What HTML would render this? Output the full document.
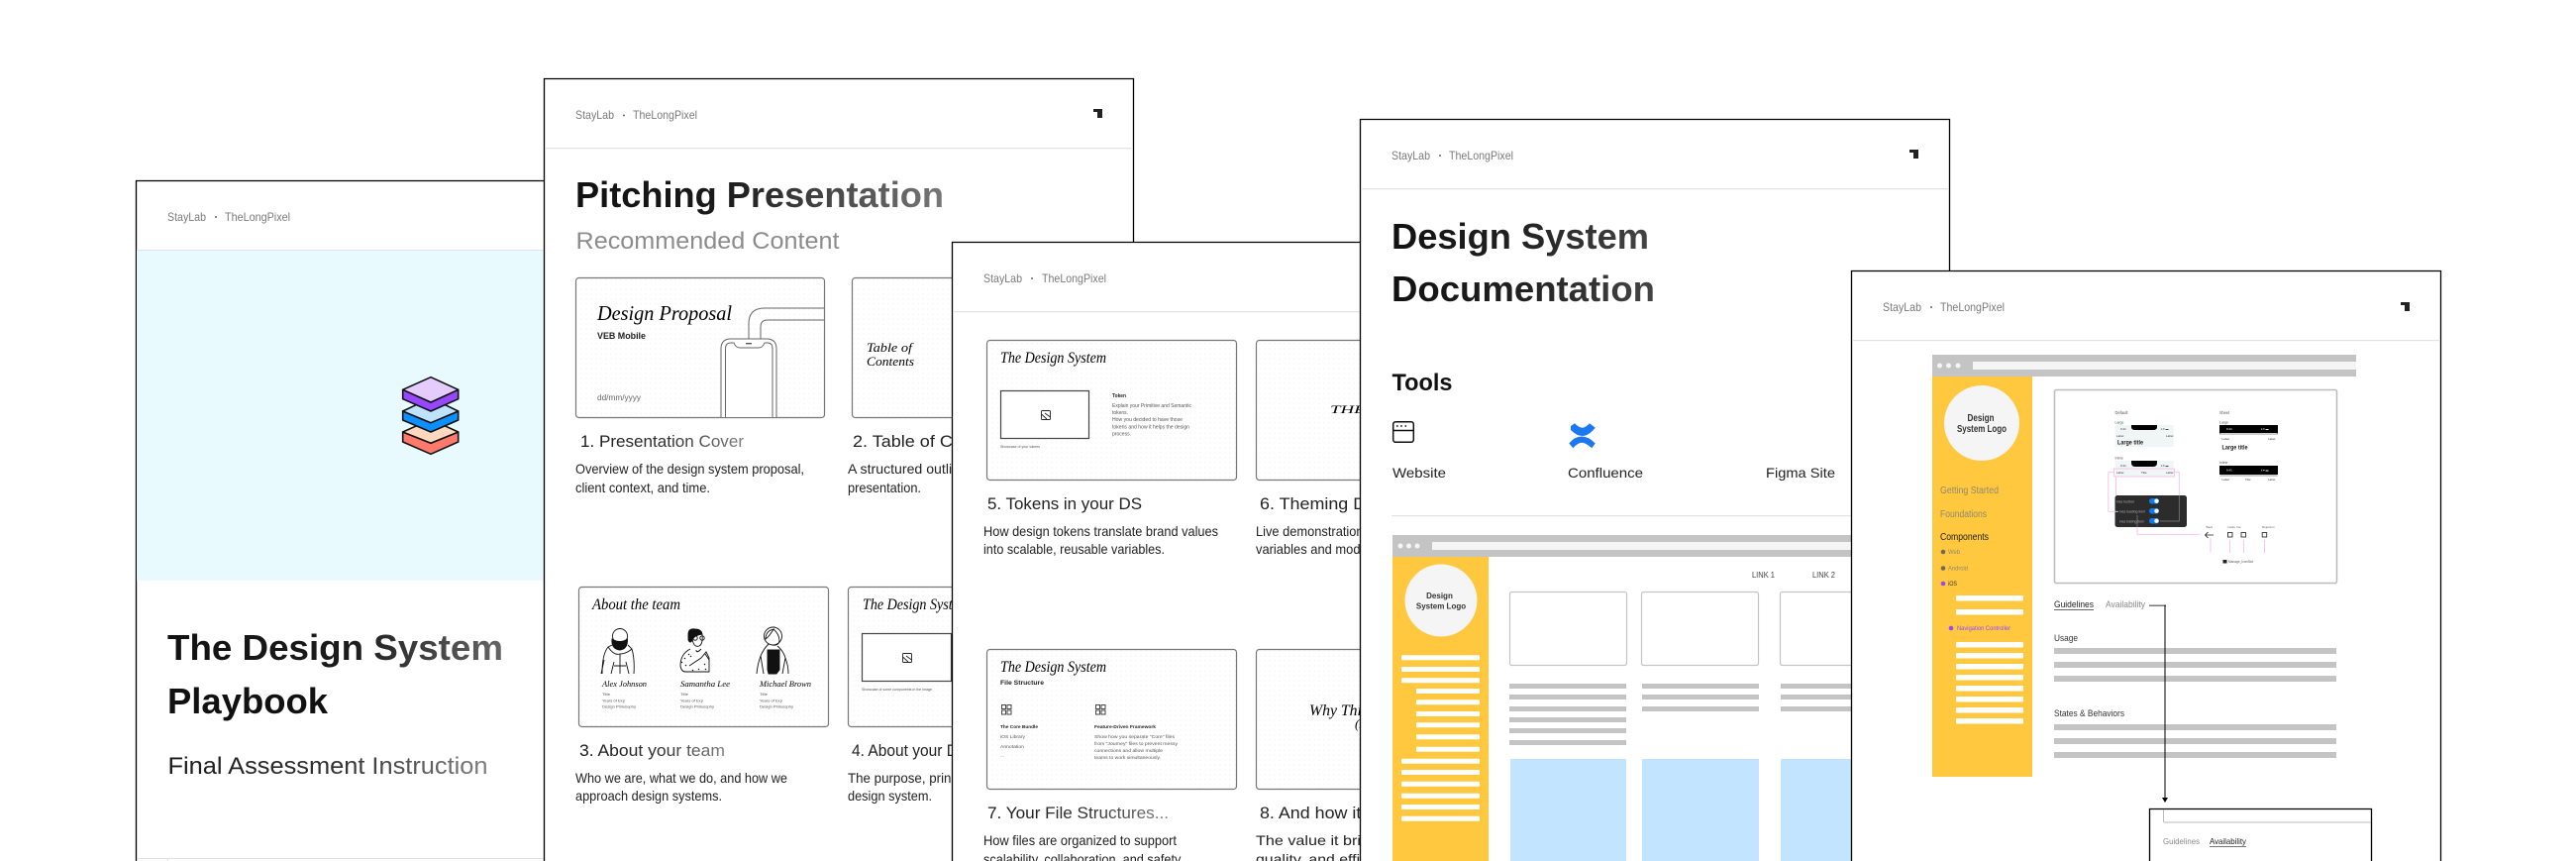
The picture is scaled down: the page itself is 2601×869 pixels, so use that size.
<!DOCTYPE html>
<html><head><meta charset="utf-8"><title>Design System Playbook</title>
<style>
html,body{margin:0;padding:0;background:#fff;width:2601px;height:869px;overflow:hidden}
svg{display:block;overflow:hidden}
text{font-family:"Liberation Sans",sans-serif;white-space:pre}
.h{font-size:12px;fill:#7a7a7a}
.t{font-size:36px;font-weight:700}
.l{font-size:17px;fill:#222}
.d{font-size:14px;fill:#222}
.s{font-family:"Liberation Serif",serif;font-style:italic;font-weight:400;fill:#000}
.m{fill:#555}
.b{fill:#c4c4c4}
.w{fill:#fff}
.pk{fill:none;stroke:#f8bfe6;stroke-width:.9}
.th{stroke:#777;stroke-width:1.2}
.c{fill:#fff;stroke:#000;stroke-width:1.3}
</style></head><body>
<svg xmlns="http://www.w3.org/2000/svg" width="2601" height="869" viewBox="0 0 2601 869">
<defs>
<pattern id="dots" width="5" height="5" patternUnits="userSpaceOnUse"><circle cx="2" cy="2" r=".55" fill="#e6e6e6"/></pattern>
<linearGradient id="g1"><stop offset="0" stop-color="#111"/><stop offset=".55" stop-color="#1c1c1c"/><stop offset="1" stop-color="#666"/></linearGradient>
<linearGradient id="g2"><stop offset="0" stop-color="#111"/><stop offset=".5" stop-color="#222"/><stop offset="1" stop-color="#444"/></linearGradient>
<linearGradient id="g3"><stop offset="0" stop-color="#1a1a1a"/><stop offset=".55" stop-color="#333"/><stop offset="1" stop-color="#808080"/></linearGradient>
<linearGradient id="g4"><stop offset="0" stop-color="#111"/><stop offset=".4" stop-color="#1a1a1a"/><stop offset="1" stop-color="#777"/></linearGradient>
</defs>

<!-- CARD 1 -->
<path class="c" d="M137.500 869V182.500H732.500V869"/>
<text class="h" x="169" y="223" textLength="39" lengthAdjust="spacingAndGlyphs">StayLab</text>
<circle cx="218" cy="219" r="1" fill="#666"/>
<text class="h" x="227" y="223" textLength="66" lengthAdjust="spacingAndGlyphs">TheLongPixel</text>
<rect x="138" y="252" width="594" height="1.500" fill="#e2e2e2"/>
<rect x="138" y="253" width="594" height="333" fill="#e9fafe"/>
<!-- layers icon -->
<g stroke="#111" stroke-width="1.600" stroke-linejoin="round">
<path d="M406.700 436V446L435 458.300L462.700 446V436L435 447.300Z" fill="#ff7a6b"/>
<path d="M435 423.300L462.700 436L435 447.300L406.700 436Z" fill="#ffd8bf"/>
<path d="M406.700 415V424L435 436L462.700 424V415L435 426.700Z" fill="#0d8fff"/>
<path d="M435 401.700L462.700 415L435 426.700L406.700 415Z" fill="#bde3ff"/>
<path d="M406.700 393.300V402.700L435 415L462.700 402.700V393.300L435 406Z" fill="#9747ff"/>
<path d="M435 380.700L462.700 393.300L435 406L406.700 393.300Z" fill="#e4ccff"/>
</g>
<text class="t" x="169" y="666" fill="url(#g1)" textLength="339" lengthAdjust="spacingAndGlyphs">The Design System</text>
<text class="t" x="169" y="720" fill="#111" textLength="162" lengthAdjust="spacingAndGlyphs">Playbook</text>
<text x="169.500" y="781" font-size="24" fill="url(#g3)" textLength="323" lengthAdjust="spacingAndGlyphs">Final Assessment Instruction</text>
<rect x="138" y="866" width="594" height="1" fill="#e0e0e0"/><rect x="169" y="866" width="1" height="3" fill="#e0e0e0"/>

<!-- CARD 2 -->
<path class="c" d="M549.500 869V79.500H1144.500V869"/>
<text class="h" x="581" y="120" textLength="39" lengthAdjust="spacingAndGlyphs">StayLab</text>
<circle cx="630" cy="116.500" r="1" fill="#666"/>
<text class="h" x="639" y="120" textLength="65" lengthAdjust="spacingAndGlyphs">TheLongPixel</text>
<path d="M1104 110H1113V119H1108V113H1104Z" fill="#222"/>
<rect x="550" y="149" width="594" height="1.200" fill="#e2e2e2"/>
<text class="t" x="581" y="209" fill="url(#g4)" textLength="372" lengthAdjust="spacingAndGlyphs">Pitching Presentation</text>
<text x="581.500" y="251" font-size="24" fill="#8c8c8c" textLength="266" lengthAdjust="spacingAndGlyphs">Recommended Content</text>

<rect x="581.500" y="280.500" width="251" height="141" rx="3" fill="#fff" class="th"/>
<rect x="582" y="281" width="250" height="140" rx="3" fill="url(#dots)"/>
<text class="s" x="603" y="323" font-size="21" textLength="136" lengthAdjust="spacingAndGlyphs">Design Proposal</text>
<text x="603" y="342" font-size="9" font-weight="700" fill="#222" textLength="49" lengthAdjust="spacingAndGlyphs">VEB Mobile</text>
<text x="603" y="404" font-size="8" fill="#666" textLength="44" lengthAdjust="spacingAndGlyphs">dd/mm/yyyy</text>
<g fill="none" stroke="#666" stroke-width="1">
<path d="M756 342V327Q756 311 772 311H832"/>
<path d="M768 342V330Q768 323 775 323H832"/>
<path d="M728 421V352Q728 342 738 342H774Q784 342 784 352V421" fill="#fff"/>
<path d="M732.500 421V352Q732.500 346 738 346H741Q743 351 747 351H766Q770 351 772 346H775Q780 346 780 352V421"/>
</g>
<rect x="753" y="346" width="6" height="1.400" fill="#555"/>

<rect x="860.500" y="280.500" width="251" height="141" rx="3" fill="#fff" class="th"/>
<rect x="861" y="281" width="250" height="140" rx="3" fill="url(#dots)"/>
<text class="s" x="875" y="355" font-size="13" textLength="46" lengthAdjust="spacingAndGlyphs">Table of</text>
<text class="s" x="875" y="369" font-size="13" textLength="48" lengthAdjust="spacingAndGlyphs">Contents</text>

<text class="l" x="586" y="451" style="fill:url(#g3)" textLength="165" lengthAdjust="spacingAndGlyphs">1. Presentation Cover</text>
<text class="l" x="861" y="451" textLength="160" lengthAdjust="spacingAndGlyphs">2. Table of Contents</text>
<text class="d" x="581" y="478" textLength="231" lengthAdjust="spacingAndGlyphs">Overview of the design system proposal,</text>
<text class="d" x="581" y="497" textLength="136" lengthAdjust="spacingAndGlyphs">client context, and time.</text>
<text class="d" x="856" y="478" textLength="160" lengthAdjust="spacingAndGlyphs">A structured outline of the</text>
<text class="d" x="856" y="497" textLength="74" lengthAdjust="spacingAndGlyphs">presentation.</text>

<rect x="584.500" y="592.500" width="252" height="141" rx="3" fill="#fff" class="th"/>
<rect x="585" y="593" width="251" height="140" rx="3" fill="url(#dots)"/>
<text class="s" x="598" y="615" font-size="16" textLength="89" lengthAdjust="spacingAndGlyphs">About the team</text>
<!-- person 1 -->
<g fill="none" stroke="#111" stroke-width=".9">
<circle cx="626" cy="642" r="7.500" fill="#fff"/>
<path d="M618 645Q617 655 626 656Q634 655 633.500 645Q626 650 618 645Z" fill="#111"/>
<path d="M618 651L614 653Q608 660 608 680M634 651L638 655Q641 665 640 680M614 653Q620 662 626 660Q632 660 638 655M626 660V680M620 672H632M617 680L620 668M635 680L632 668"/>
<path d="M607 680L610 666"/>
</g>
<!-- person 2 -->
<g fill="none" stroke="#111" stroke-width=".9">
<path d="M695 640Q695 634 702 635Q708 635 709 640Q701 641 699 646Q697 650 695 646Z" fill="#111"/>
<path d="M699 644Q700 654 706 652Q710 650 709 640"/>
<circle cx="702" cy="644" r="2.200"/><circle cx="709" cy="644" r="2.200"/>
<path d="M697 655Q687 660 687 672Q688 678 692 678H716V664L713 658L708 664L696 672M703 656Q703 660 708 655M712 660L716 666"/>
<path d="M691 664l1 1M697 662l1 1M692 671l1 1M699 676l1 1M705 675l1 1M711 670l1 1M712 675l1 1M688 668l1 1M695 660l1 1" stroke-width="1.200"/>
</g>
<!-- person 3 -->
<g fill="none" stroke="#111" stroke-width=".9">
<circle cx="780.500" cy="642" r="9" fill="#fff"/>
<path d="M773 645Q773 637 781 635Q777 642 773 645ZM781 635Q787 640 787 647Q786 652 780 651"/>
<path d="M776 650Q771 655 768 662Q765 670 764 680M785 652Q791 657 793 664Q796 672 796 680M768 662L771 680M793 664L790 680"/>
<path d="M775 656H787V676L784 680H776L775 676Z" fill="#111"/>
</g>
<text class="s" x="608" y="693" font-size="8" textLength="45" lengthAdjust="spacingAndGlyphs">Alex Johnson</text>
<text class="s" x="687" y="693" font-size="8" textLength="50" lengthAdjust="spacingAndGlyphs">Samantha Lee</text>
<text class="s" x="767" y="693" font-size="8" textLength="52" lengthAdjust="spacingAndGlyphs">Michael Brown</text>
<g font-size="4" class="m">
<text x="608" y="702" textLength="8" lengthAdjust="spacingAndGlyphs">Title</text><text x="608" y="708.500" textLength="23" lengthAdjust="spacingAndGlyphs">Years of Exp</text><text x="608" y="714.500" textLength="34" lengthAdjust="spacingAndGlyphs">Design Philosophy</text>
<text x="687" y="702" textLength="8" lengthAdjust="spacingAndGlyphs">Title</text><text x="687" y="708.500" textLength="23" lengthAdjust="spacingAndGlyphs">Years of Exp</text><text x="687" y="714.500" textLength="34" lengthAdjust="spacingAndGlyphs">Design Philosophy</text>
<text x="767" y="702" textLength="8" lengthAdjust="spacingAndGlyphs">Title</text><text x="767" y="708.500" textLength="23" lengthAdjust="spacingAndGlyphs">Years of Exp</text><text x="767" y="714.500" textLength="34" lengthAdjust="spacingAndGlyphs">Design Philosophy</text>
</g>

<rect x="856.500" y="592.500" width="252" height="141" rx="3" fill="#fff" class="th"/>
<rect x="857" y="593" width="251" height="140" rx="3" fill="url(#dots)"/>
<text class="s" x="871" y="615" font-size="16" textLength="107" lengthAdjust="spacingAndGlyphs">The Design System</text>
<rect x="870.500" y="639.500" width="90" height="48" fill="#fff" stroke="#444" stroke-width="1.200"/>
<g fill="none" stroke="#222" stroke-width=".9"><rect x="911.500" y="659.500" width="9" height="9" rx="1"/><path d="M911.500 663L917 668M915 662l5.500 4"/></g>
<text x="870" y="697" font-size="3.500" class="m" textLength="71" lengthAdjust="spacingAndGlyphs">Showcase of some components in the image</text>

<text class="l" x="585" y="763" style="fill:url(#g3)" textLength="147" lengthAdjust="spacingAndGlyphs">3. About your team</text>
<text class="l" x="860" y="763" textLength="200" lengthAdjust="spacingAndGlyphs">4. About your Design System</text>
<text class="d" x="581" y="790" textLength="214" lengthAdjust="spacingAndGlyphs">Who we are, what we do, and how we</text>
<text class="d" x="581" y="808" textLength="148" lengthAdjust="spacingAndGlyphs">approach design systems.</text>
<text class="d" x="856" y="790" textLength="183" lengthAdjust="spacingAndGlyphs">The purpose, principles of your</text>
<text class="d" x="856" y="808" textLength="85" lengthAdjust="spacingAndGlyphs">design system.</text>

<!-- CARD 3 -->
<path class="c" d="M961.500 869V244.500H1556.500V869"/>
<text class="h" x="993" y="285" textLength="39" lengthAdjust="spacingAndGlyphs">StayLab</text>
<circle cx="1042" cy="281" r="1" fill="#666"/>
<text class="h" x="1052" y="285" textLength="65" lengthAdjust="spacingAndGlyphs">TheLongPixel</text>
<rect x="962" y="314" width="594" height="1.200" fill="#e2e2e2"/>

<rect x="996.500" y="343.500" width="252" height="141" rx="3" fill="#fff" class="th"/>
<rect x="997" y="344" width="251" height="140" rx="3" fill="url(#dots)"/>
<text class="s" x="1010" y="366" font-size="16" textLength="107" lengthAdjust="spacingAndGlyphs">The Design System</text>
<rect x="1010.500" y="394.500" width="89" height="48" fill="#fff" stroke="#444" stroke-width="1.200"/>
<g fill="none" stroke="#222" stroke-width=".9"><rect x="1051.500" y="414.500" width="9" height="9" rx="1"/><path d="M1051.500 418L1057 423M1055 417l5.500 4"/></g>
<text x="1010" y="452" font-size="3.500" class="m" textLength="40" lengthAdjust="spacingAndGlyphs">Showcase of your tokens</text>
<text x="1123" y="401" font-size="5" font-weight="700" fill="#222" textLength="14" lengthAdjust="spacingAndGlyphs">Token</text>
<g font-size="5" class="m">
<text x="1123" y="411" textLength="80" lengthAdjust="spacingAndGlyphs">Explain your Primitive and Semantic</text>
<text x="1123" y="418" textLength="16" lengthAdjust="spacingAndGlyphs">tokens.</text>
<text x="1123" y="425" textLength="71" lengthAdjust="spacingAndGlyphs">How you decided to have those</text>
<text x="1123" y="432.500" textLength="78" lengthAdjust="spacingAndGlyphs">tokens and how it helps the design</text>
<text x="1123" y="439.500" textLength="19" lengthAdjust="spacingAndGlyphs">process.</text>
</g>

<rect x="1268.500" y="343.500" width="252" height="141" rx="3" fill="#fff" class="th"/>
<rect x="1269" y="344" width="251" height="140" rx="3" fill="url(#dots)"/>
<text class="s" x="1343" y="417" font-size="12" textLength="84" lengthAdjust="spacingAndGlyphs">THEMING</text>

<text class="l" x="997" y="514" textLength="156" lengthAdjust="spacingAndGlyphs">5. Tokens in your DS</text>
<text class="l" x="1272" y="514" textLength="150" lengthAdjust="spacingAndGlyphs">6. Theming Design</text>
<text class="d" x="993" y="541" textLength="237" lengthAdjust="spacingAndGlyphs">How design tokens translate brand values</text>
<text class="d" x="993" y="559" textLength="183" lengthAdjust="spacingAndGlyphs">into scalable, reusable variables.</text>
<text class="d" x="1268" y="541" textLength="150" lengthAdjust="spacingAndGlyphs">Live demonstration of how</text>
<text class="d" x="1268" y="559" textLength="150" lengthAdjust="spacingAndGlyphs">variables and modes work</text>

<rect x="996.500" y="655.500" width="252" height="141" rx="3" fill="#fff" class="th"/>
<rect x="997" y="656" width="251" height="140" rx="3" fill="url(#dots)"/>
<text class="s" x="1010" y="678" font-size="16" textLength="107" lengthAdjust="spacingAndGlyphs">The Design System</text>
<text x="1010" y="691" font-size="6.500" font-weight="700" fill="#222" textLength="44" lengthAdjust="spacingAndGlyphs">File Structure</text>
<g fill="none" stroke="#333" stroke-width=".9">
<rect x="1011.500" y="711.500" width="4" height="4"/><rect x="1017" y="711.500" width="4" height="4"/><rect x="1011.500" y="717" width="4" height="4"/><rect x="1017" y="717" width="4" height="4"/>
<rect x="1106.500" y="711.500" width="4" height="4"/><rect x="1112" y="711.500" width="4" height="4"/><rect x="1106.500" y="717" width="4" height="4"/><rect x="1112" y="717" width="4" height="4"/>
</g>
<text x="1010" y="735" font-size="4.500" font-weight="700" fill="#222" textLength="38" lengthAdjust="spacingAndGlyphs">The Core Bundle</text>
<text x="1105" y="735" font-size="4.500" font-weight="700" fill="#222" textLength="62" lengthAdjust="spacingAndGlyphs">Feature-Driven Framework</text>
<g font-size="4.500" class="m">
<text x="1010" y="745" textLength="25" lengthAdjust="spacingAndGlyphs">iOS Library</text>
<text x="1010" y="755" textLength="24" lengthAdjust="spacingAndGlyphs">Annotation</text>
<text x="1010" y="764">...</text>
<text x="1105" y="745" textLength="81" lengthAdjust="spacingAndGlyphs">Show how you separate "Core" files</text>
<text x="1105" y="752" textLength="84" lengthAdjust="spacingAndGlyphs">from "Journey" files to prevent messy</text>
<text x="1105" y="759" textLength="69" lengthAdjust="spacingAndGlyphs">connections and allow multiple</text>
<text x="1105" y="766" textLength="67" lengthAdjust="spacingAndGlyphs">teams to work simultaneously.</text>
</g>

<rect x="1268.500" y="655.500" width="252" height="141" rx="3" fill="#fff" class="th"/>
<rect x="1269" y="656" width="251" height="140" rx="3" fill="url(#dots)"/>
<text class="s" x="1322" y="722" font-size="16" textLength="112" lengthAdjust="spacingAndGlyphs">Why This Matters</text>
<text class="s" x="1368" y="735" font-size="13">(ROI)</text>

<text class="l" x="997" y="826" style="fill:url(#g3)" textLength="183" lengthAdjust="spacingAndGlyphs">7. Your File Structures...</text>
<text class="l" x="1272" y="826" textLength="150" lengthAdjust="spacingAndGlyphs">8. And how it helps</text>
<text class="d" x="993" y="853" textLength="195" lengthAdjust="spacingAndGlyphs">How files are organized to support</text>
<text class="d" x="993" y="872" textLength="202" lengthAdjust="spacingAndGlyphs">scalability, collaboration, and safety.</text>
<text class="d" x="1268" y="853" textLength="150" lengthAdjust="spacingAndGlyphs">The value it brings to</text>
<text class="d" x="1268" y="872" textLength="150" lengthAdjust="spacingAndGlyphs">quality, and efficiency</text>

<!-- CARD 4 -->
<path class="c" d="M1373.500 869V120.500H1968.500V869"/>
<text class="h" x="1405" y="161" textLength="39" lengthAdjust="spacingAndGlyphs">StayLab</text>
<circle cx="1454" cy="157" r="1" fill="#666"/>
<text class="h" x="1463" y="161" textLength="65" lengthAdjust="spacingAndGlyphs">TheLongPixel</text>
<path d="M1928 151H1937V160H1932V154H1928Z" fill="#222"/>
<rect x="1374" y="190" width="594" height="1.200" fill="#e2e2e2"/>
<text class="t" x="1405" y="251" fill="url(#g2)" textLength="260" lengthAdjust="spacingAndGlyphs">Design System</text>
<text class="t" x="1405" y="304" fill="url(#g2)" textLength="266" lengthAdjust="spacingAndGlyphs">Documentation</text>
<text x="1405.500" y="394" font-size="24" font-weight="700" fill="#111" textLength="61" lengthAdjust="spacingAndGlyphs">Tools</text>
<g fill="none" stroke="#111" stroke-width="1.500"><rect x="1406.700" y="425.700" width="20.600" height="20.600" rx="2.500"/><path d="M1407 434.500H1427"/></g>
<circle cx="1410.800" cy="430" r=".9" fill="#111"/><circle cx="1415" cy="430" r=".9" fill="#111"/><circle cx="1419.300" cy="430" r=".9" fill="#111"/>
<path d="M1586 430L1590 427.300Q1594 431.700 1597.700 431.700Q1601 431.700 1605 427.300L1610.700 431.700Q1604 440 1597.700 440Q1592 440 1586 434Z" fill="#1b78f0"/>
<path d="M1584.300 447.500Q1590 440.500 1597 440.500Q1604 440.500 1610.700 447.500L1607.300 452.300Q1601 446.700 1597.300 446.700Q1593 446.700 1588.300 452.300Z" fill="#1b78f0"/>
<text x="1406" y="482" font-size="14" fill="#222" textLength="54" lengthAdjust="spacingAndGlyphs">Website</text>
<text x="1583" y="482" font-size="14" fill="#222" textLength="76" lengthAdjust="spacingAndGlyphs">Confluence</text>
<text x="1783" y="482" font-size="14" fill="#222" textLength="70" lengthAdjust="spacingAndGlyphs">Figma Site</text>
<rect x="1405" y="520" width="563" height="1.200" fill="#e2e2e2"/>

<rect x="1406" y="540" width="562" height="22" fill="#c4c4c4"/>
<circle cx="1414" cy="551" r="2.500" fill="#f5f5f5"/><circle cx="1422.500" cy="551" r="2.500" fill="#f5f5f5"/><circle cx="1431" cy="551" r="2.500" fill="#f5f5f5"/>
<rect x="1446" y="547" width="522" height="8" fill="#f5f5f5"/>
<rect x="1406" y="562" width="97" height="307" fill="#ffc83f"/>
<circle cx="1455" cy="606" r="36.500" fill="#f5f5f5"/>
<text x="1453.500" y="604" font-size="8" font-weight="700" fill="#333" text-anchor="middle">Design</text>
<text x="1455" y="614.500" font-size="8" font-weight="700" fill="#333" text-anchor="middle">System Logo</text>
<g class="w">
<rect x="1415" y="661.300" width="79" height="5" rx="1"/><rect x="1415" y="673" width="79" height="5" rx="1"/><rect x="1415" y="684.300" width="79" height="5" rx="1"/>
<rect x="1430" y="695" width="64" height="5" rx="1"/><rect x="1430" y="706.300" width="64" height="5" rx="1"/><rect x="1430" y="718" width="64" height="5" rx="1"/><rect x="1430" y="729.300" width="64" height="5" rx="1"/><rect x="1430" y="741.300" width="64" height="5" rx="1"/><rect x="1430" y="753.700" width="64" height="5" rx="1"/>
<rect x="1415" y="765.700" width="79" height="5" rx="1"/><rect x="1415" y="777" width="79" height="5" rx="1"/><rect x="1415" y="788.700" width="79" height="5" rx="1"/><rect x="1415" y="800.700" width="79" height="5" rx="1"/><rect x="1415" y="812" width="79" height="5" rx="1"/><rect x="1415" y="823.700" width="79" height="5" rx="1"/>
</g>
<text x="1769" y="583" font-size="8.500" fill="#444" textLength="23" lengthAdjust="spacingAndGlyphs">LINK 1</text>
<text x="1830" y="583" font-size="8.500" fill="#444" textLength="23" lengthAdjust="spacingAndGlyphs">LINK 2</text>
<g fill="#fff" stroke="#c4c4c4" stroke-width="1.200">
<rect x="1524.500" y="597.500" width="118" height="74" rx="2"/><rect x="1657.500" y="597.500" width="118" height="74" rx="2"/><rect x="1797.500" y="597.500" width="118" height="74" rx="2"/>
</g>
<g class="b">
<rect x="1524" y="690" width="118" height="5"/><rect x="1524" y="701" width="118" height="5"/><rect x="1524" y="713" width="118" height="5"/><rect x="1524" y="724" width="118" height="5"/><rect x="1524" y="735" width="118" height="5"/><rect x="1524" y="747" width="118" height="5"/>
<rect x="1658" y="690" width="118" height="5"/><rect x="1658" y="701" width="118" height="5"/><rect x="1658" y="713" width="118" height="5"/>
<rect x="1798" y="690" width="118" height="5"/><rect x="1798" y="701" width="118" height="5"/><rect x="1798" y="713" width="118" height="5"/>
</g>
<g fill="#c2e4ff"><rect x="1525" y="766" width="117" height="103"/><rect x="1658" y="766" width="118" height="103"/><rect x="1798" y="766" width="118" height="103"/></g>

<!-- CARD 5 -->
<path class="c" d="M1869.500 869V273.500H2464.500V869"/>
<text class="h" x="1901" y="314" textLength="39" lengthAdjust="spacingAndGlyphs">StayLab</text>
<circle cx="1950" cy="310" r="1" fill="#666"/>
<text class="h" x="1959" y="314" textLength="65" lengthAdjust="spacingAndGlyphs">TheLongPixel</text>
<path d="M2424 305H2433V314H2428V308H2424Z" fill="#222"/>
<rect x="1870" y="343" width="594" height="1.200" fill="#e2e2e2"/>

<rect x="1951" y="358" width="428" height="22" fill="#c4c4c4"/>
<circle cx="1958.500" cy="369" r="2.500" fill="#f5f5f5"/><circle cx="1967.500" cy="369" r="2.500" fill="#f5f5f5"/><circle cx="1977" cy="369" r="2.500" fill="#f5f5f5"/>
<rect x="1992" y="365" width="387" height="8" fill="#f5f5f5"/>
<rect x="1951" y="380" width="101" height="404" fill="#ffc83f"/>
<ellipse cx="2001" cy="427" rx="38" ry="38" fill="#f5f5f5"/>
<text x="2000" y="425" font-size="10" font-weight="700" fill="#333" text-anchor="middle" textLength="27" lengthAdjust="spacingAndGlyphs">Design</text>
<text x="2001" y="436" font-size="10" font-weight="700" fill="#333" text-anchor="middle" textLength="50" lengthAdjust="spacingAndGlyphs">System Logo</text>
<text x="1959" y="498" font-size="10" fill="#8f8a6f" textLength="59" lengthAdjust="spacingAndGlyphs">Getting Started</text>
<text x="1959" y="522" font-size="10" fill="#8f8a6f" textLength="47" lengthAdjust="spacingAndGlyphs">Foundations</text>
<text x="1959" y="545" font-size="10" fill="#222" textLength="49" lengthAdjust="spacingAndGlyphs">Components</text>
<circle cx="1962" cy="557" r="2.300" fill="#6e6a55"/><text x="1967" y="559" font-size="6" fill="#8f8a6f" textLength="12" lengthAdjust="spacingAndGlyphs">Web</text>
<circle cx="1962" cy="573.500" r="2.300" fill="#6e6a55"/><text x="1967" y="575.500" font-size="6" fill="#8f8a6f" textLength="20" lengthAdjust="spacingAndGlyphs">Android</text>
<circle cx="1962" cy="589" r="2.300" fill="#9747ff"/><text x="1967" y="591" font-size="6" fill="#333" textLength="9" lengthAdjust="spacingAndGlyphs">iOS</text>
<circle cx="1970" cy="634" r="2.300" fill="#9747ff"/><text x="1976" y="636" font-size="6" fill="#9747ff" textLength="54" lengthAdjust="spacingAndGlyphs">Navigation Controller</text>
<g class="w">
<rect x="1975" y="601" width="68" height="5.500" rx="1"/><rect x="1975" y="615" width="68" height="5.500" rx="1"/>
<rect x="1975" y="648" width="68" height="5.500" rx="1"/><rect x="1975" y="659" width="68" height="5.500" rx="1"/><rect x="1975" y="670" width="68" height="5.500" rx="1"/><rect x="1975" y="681" width="68" height="5.500" rx="1"/><rect x="1975" y="692" width="68" height="5.500" rx="1"/><rect x="1975" y="703" width="68" height="5.500" rx="1"/><rect x="1975" y="714" width="68" height="5.500" rx="1"/><rect x="1975" y="725" width="68" height="5.500" rx="1"/>
</g>

<!-- spec box -->
<rect x="2074.500" y="393.500" width="285" height="195" rx="2" fill="#fff" stroke="#bbb" stroke-width="1.500"/>
<g font-size="3.500" fill="#555">
<text x="2135.500" y="418" font-size="4.500" textLength="13" lengthAdjust="spacingAndGlyphs">Default</text>
<text x="2241" y="418" font-size="4.500" textLength="10" lengthAdjust="spacingAndGlyphs">Sheet</text>
<text x="2135.500" y="427.500">Large</text><text x="2241" y="427.500">Large</text>
<text x="2135.500" y="463.500">Inline</text><text x="2241" y="468">Inline</text>
</g>
<rect x="2135.500" y="429" width="59" height="22" fill="#f0f6f6"/>
<path d="M2152 429H2178V431Q2178 434 2174 434H2156Q2152 434 2152 431Z" fill="#000"/>
<g font-size="3" fill="#333">
<text x="2141" y="434">9:41</text><text x="2181" y="434">.ıl ▾ ▬</text>
<text x="2137" y="441">Label</text><text x="2187" y="441">Label</text>
</g>
<text x="2138" y="448.500" font-size="6.500" font-weight="700" fill="#222" textLength="26" lengthAdjust="spacingAndGlyphs">Large title</text>
<rect x="2135.500" y="465" width="59" height="16" fill="#f0f6f6"/>
<path d="M2152 465H2178V467Q2178 471 2174 471H2156Q2152 471 2152 467Z" fill="#000"/>
<g font-size="3" fill="#333">
<text x="2141" y="471">9:41</text><text x="2181" y="471">.ıl ▾ ▬</text>
<text x="2137" y="478">Label</text><text x="2162" y="478">Title</text><text x="2187" y="478">Label</text>
</g>
<rect x="2241" y="429" width="59" height="8.500" fill="#000"/>
<path d="M2241 439Q2241 437 2243 437H2298Q2300 437 2300 439Z" fill="#ccc"/>
<g font-size="3" fill="#fff"><text x="2248" y="434">9:41</text><text x="2282" y="434">.ıl ▾ ▬</text></g>
<g font-size="3" fill="#333"><text x="2243.500" y="444">Label</text><text x="2290" y="444">Label</text></g>
<text x="2243.500" y="453.500" font-size="6.500" font-weight="700" fill="#222" textLength="26" lengthAdjust="spacingAndGlyphs">Large title</text>
<rect x="2241" y="470" width="59" height="9" fill="#000"/>
<path d="M2241 481Q2241 479 2243 479H2298Q2300 479 2300 481Z" fill="#ccc"/>
<g font-size="3" fill="#fff"><text x="2248" y="475.500">9:41</text><text x="2282" y="475.500">.ıl ▾ ▬</text></g>
<g font-size="3" fill="#333"><text x="2243.500" y="485">Label</text><text x="2267" y="485">Title</text><text x="2290" y="485">Label</text></g>

<rect x="2135.500" y="500" width="72.500" height="32" rx="2.500" fill="#2c2c2c"/>
<g font-size="3.500" fill="#aaa">
<text x="2137" y="507.500">Has toolbar</text><text x="2140" y="517.500">Has leading item</text><text x="2140" y="527.500">Has trailing item</text>
</g>
<g fill="#0d7cf2"><rect x="2170" y="503" width="10" height="5.500" rx="2.700"/><rect x="2170" y="513" width="10" height="5.500" rx="2.700"/><rect x="2170" y="523" width="10" height="5.500" rx="2.700"/></g>
<g fill="#fff"><circle cx="2177.500" cy="505.700" r="2.200"/><circle cx="2177.500" cy="515.700" r="2.200"/><circle cx="2177.500" cy="525.700" r="2.200"/></g>

<rect x="2134.500" y="473" width="61" height="8" class="pk"/>
<path class="pk" d="M2134.500 476.700H2128.800V516.300H2138.900"/>
<path class="pk" d="M2195.500 476.700H2200.300V500"/>
<path d="M2200.300 500V526H2180.800" fill="none" stroke="#888" stroke-width=".7"/>
<path class="pk" d="M2136.500 481.700V500"/>
<path d="M2158 520V532" fill="none" stroke="#888" stroke-width=".7"/>
<path class="pk" d="M2158 532V539.300H2221"/>
<path class="pk" d="M2232 543.300V557.700M2251.600 545V558M2265.400 545V558M2286.500 545V558"/>
<g font-size="3" fill="#666"><text x="2227.500" y="533">Back</text><text x="2249" y="533">Inside Cta</text><text x="2284" y="533">Rejection</text></g>
<path d="M2235 540H2226.500M2229.500 537L2226.500 540L2229.500 543" fill="none" stroke="#222" stroke-width=".8"/>
<g fill="none" stroke="#333" stroke-width=".9"><rect x="2249.500" y="537.500" width="4.500" height="4.500"/><rect x="2263" y="537.500" width="4.500" height="4.500"/><rect x="2284.200" y="537.500" width="4.500" height="4.500"/></g>
<rect x="2244.500" y="565" width="4" height="3.500" fill="#222"/>
<text x="2250" y="568" font-size="3.500" fill="#555" textLength="25" lengthAdjust="spacingAndGlyphs">Manage_IconSlot</text>

<text x="2074" y="613" font-size="9.500" fill="#222" textLength="40" lengthAdjust="spacingAndGlyphs">Guidelines</text>
<rect x="2074" y="615" width="40" height="1" fill="#666"/>
<text x="2126" y="613" font-size="9.500" fill="#888" textLength="40" lengthAdjust="spacingAndGlyphs">Availability</text>
<text x="2074" y="647" font-size="9.500" fill="#333" textLength="24" lengthAdjust="spacingAndGlyphs">Usage</text>
<text x="2074" y="723" font-size="9.500" fill="#333" textLength="71" lengthAdjust="spacingAndGlyphs">States &amp; Behaviors</text>
<g class="b">
<rect x="2074" y="654" width="285" height="6"/><rect x="2074" y="668" width="285" height="6"/><rect x="2074" y="682" width="285" height="6"/>
<rect x="2074" y="731" width="285" height="6"/><rect x="2074" y="745" width="285" height="6"/><rect x="2074" y="759" width="285" height="6"/>
</g>
<rect x="2170" y="610.500" width="17" height="1.500" fill="#777"/>
<rect x="2185.500" y="610.500" width="1" height="196" fill="#000"/>
<path d="M2183 805H2189L2186 810Z" fill="#000"/>

<path class="c" d="M2170.500 869V816.500H2394.500V869"/>
<path d="M2184.500 817V829Q2184.500 830 2186 830H2394" fill="none" stroke="#bbb" stroke-width="1"/>
<text x="2184" y="852" font-size="8.500" fill="#888" textLength="37" lengthAdjust="spacingAndGlyphs">Guidelines</text>
<text x="2231" y="852" font-size="8.500" fill="#222" textLength="37" lengthAdjust="spacingAndGlyphs">Availability</text>
<rect x="2231" y="854" width="37" height="1" fill="#777"/>
</svg>
</body></html>
